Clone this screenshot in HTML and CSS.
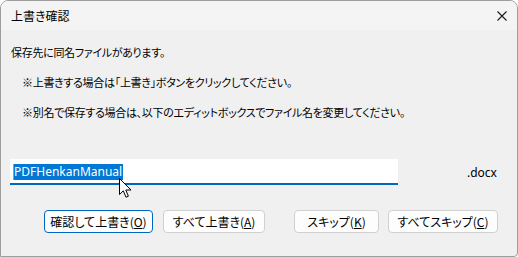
FILE: index.html
```html
<!DOCTYPE html>
<html lang="ja">
<head>
<meta charset="utf-8">
<title>上書き確認</title>
<link rel="stylesheet" href="styles.css">
</head>
<body>
<div class="window">
  <div class="titlebar">
    <span class="title">上書き確認</span>
    <span class="close">
      <svg width="10" height="10" viewBox="0 0 10 10"><path d="M0.5 0.5 L9.5 9.5 M9.5 0.5 L0.5 9.5" stroke="#1a1a1a" stroke-width="1.1" fill="none"/></svg>
    </span>
  </div>
  <div class="content">
    <p class="line">保存先に同名ファイルがあります。</p>
    <p class="line indent">※上書きする場合は「上書き」ボタンをクリックしてください。</p>
    <p class="line indent">※別名で保存する場合は、以下のエディットボックスでファイル名を変更してください。</p>
    <div class="input-row">
      <div class="editbox"><span class="sel">PDFHenkanManual</span></div>
      <span class="ext">.docx</span>
    </div>
    <div class="buttons">
      <button class="btn btn-ok focused">確認して上書き(<u>O</u>)</button>
      <button class="btn btn-all">すべて上書き(<u>A</u>)</button>
      <button class="btn btn-skip">スキップ(<u>K</u>)</button>
      <button class="btn btn-skipall">すべてスキップ(<u>C</u>)</button>
    </div>
  </div>
  <svg class="cursor" width="13" height="21" viewBox="0 0 13 21"><path d="M0.5 0.5 L0.5 16.5 L4.3 12.8 L7 19.2 L9.4 18.2 L6.8 12 L12 12 Z" fill="#fff" stroke="#000" stroke-width="1" stroke-linejoin="miter"/></svg>
</div>
</body>
</html>
```
FILE: styles.css
```css
html, body {
  margin: 0;
  padding: 0;
  background: #ffffff;
}
.window {
  position: relative;
  width: 518px;
  height: 257px;
  box-sizing: border-box;
  border: 1px solid #9d9d9d;
  border-radius: 8px 8px 4px 0;
  background: #f0f0f0;
  overflow: hidden;
  font-family: "Noto Sans CJK JP", sans-serif;
  font-feature-settings: "palt";
  font-size: 12px;
  color: #000;
}
.titlebar {
  height: 29px;
  background: #f4f4f4;
  display: flex;
  align-items: center;
  justify-content: space-between;
  padding-left: 10px;
}
.title {
  font-size: 12px;
  line-height: 29px;
}
.close {
  width: 30px;
  height: 29px;
  display: flex;
  align-items: center;
  justify-content: center;
}
.close svg { display: block; }
.content {
  padding-top: 7px;
}
.line {
  margin: 0;
  height: 30px;
  line-height: 30px;
  padding-left: 10px;
  white-space: nowrap;
  font-size: 11px;
  letter-spacing: -0.3px;
}
.line.indent {
  padding-left: 21px;
}
.input-row {
  margin-top: 32px;
  display: flex;
  align-items: flex-start;
}
.editbox {
  margin-left: 9px;
  width: 385px;
  height: 24px;
  background: #ffffff;
  border-bottom: 2px solid #0067c0;
  display: flex;
  align-items: center;
  padding-left: 3px;
  box-sizing: content-box;
}
.sel {
  font-family: "Noto Sans", "Noto Sans CJK JP", sans-serif;
  font-size: 12px;
  line-height: 16px;
  background: #0078d4;
  color: #ffffff;
  border-left: 1px solid #f08a24;
  padding-right: 1px;
  margin-top: 1px;
}
.ext {
  font-family: "Noto Sans", sans-serif;
  font-size: 12px;
  margin-left: 69px;
  line-height: 16px;
  margin-top: 6px;
}
.buttons {
  margin-top: 25px;
  display: flex;
  padding-left: 43px;
}
.btn {
  height: 23px;
  box-sizing: border-box;
  border: 1px solid #d0d0d0;
  border-radius: 4px;
  background: #fdfdfd;
  font-family: "Noto Sans CJK JP", sans-serif;
  font-feature-settings: "palt";
  font-size: 12px;
  color: #000;
  padding: 0;
  line-height: 20px;
}
.btn u { text-underline-offset: 1px; }
.btn.focused {
  border-color: #0067c0;
}
.btn-ok { width: 109px; }
.btn-all { width: 102px; margin-left: 10px; }
.btn-skip { width: 85px; margin-left: 29px; }
.btn-skipall { width: 110px; margin-left: 9px; }
.cursor {
  position: absolute;
  left: 118px;
  top: 177px;
}
```
